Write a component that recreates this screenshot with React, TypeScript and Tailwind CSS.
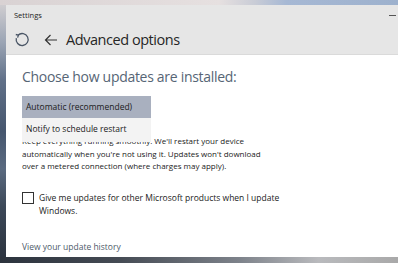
import React from "react";

export default function App() {
  const font = { fontFamily: '"Open Sans", "Noto Sans", sans-serif' };
  return (
    <div className="w-[398px] h-[263px] overflow-hidden flex flex-col" style={font}>
      <div className="h-[5px] shrink-0 bg-[linear-gradient(90deg,#d9d2d3_0%,#e6e0e0_55%,#c9ccd6_64%,#a6b8d4_72%,#9db1cd_100%)]" />
      <div className="flex h-[252px] shrink-0">
        <div className="w-[6px] shrink-0 bg-[linear-gradient(180deg,#cfcdd0_0%,#9aa4b4_15%,#607088_30%,#46566e_50%,#5a6a80_65%,#3c4858_80%,#2c3440_100%)]" />
        <div className="w-[392px] bg-white flex flex-col">
          <div className="bg-[#e6e6e6] h-[50px] flex flex-col border-b border-[#dadada]">
            <div className="flex items-center h-[21px] pl-[8px] pr-[2px]">
              <span className="text-[7.5px] text-[#222] leading-none">Settings</span>
              <div className="ml-auto w-[7px] h-[1px] bg-[#555]" />
            </div>
            <div className="flex items-center h-[28px] pl-[8px]">
              <svg width="16" height="16" viewBox="0 0 16 16" fill="none" stroke="#4a5666" strokeWidth="1.3">
                <path d="M4 3.2 A6 6 0 1 1 2.3 6.2" />
                <path d="M1.8 2.5 L4.4 3.1 L3.6 5.6" />
              </svg>
              <svg className="ml-[14px]" width="14" height="12" viewBox="0 0 14 12" fill="none" stroke="#333" strokeWidth="1.2">
                <path d="M13 6 H1.5 M6.5 1 L1.5 6 L6.5 11" />
              </svg>
              <span className="ml-[8px] text-[14.5px] tracking-[-0.45px] text-[#262626] leading-none">Advanced options</span>
            </div>
          </div>
          <div className="relative flex-1 pl-[16px] pt-[15px]">
            <div className="text-[14px] tracking-[-0.3px] text-[#566575] leading-[14px]">Choose how updates are installed:</div>
            <div className="pt-[51px] text-[8px] leading-[12.5px] text-[#222] whitespace-nowrap">
              Keep everything running smoothly. We'll restart your device
              <br />
              automatically when you're not using it. Updates won't download
              <br />
              over a metered connection (where charges may apply).
            </div>
            <div className="absolute left-[16px] top-[41px] w-[129px] flex flex-col">
              <div className="h-[22px] bg-[#a9b0bf] flex items-center pl-[4px] text-[8.5px] text-[#1a1a1a]">Automatic (recommended)</div>
              <div className="h-[24px] bg-[#f3f3f3] flex items-start pt-[5px] pl-[4px] text-[8.5px] leading-[12px] text-[#1a1a1a]">Notify to schedule restart</div>
            </div>
            <div className="flex mt-[18px]">
              <div className="w-[12px] h-[12px] border border-[#333] mt-[1px] shrink-0" />
              <div className="ml-[5px] text-[8.5px] leading-[13px] text-[#222] whitespace-nowrap">
                Give me updates for other Microsoft products when I update
                <br />
                Windows.
              </div>
            </div>
            <div className="mt-[26px] text-[8.5px] text-[#4e5a6a] leading-none">View your update history</div>
          </div>
        </div>
      </div>
      <div className="flex-1 bg-[linear-gradient(90deg,#2c333d_0%,#454b54_30%,#7d828a_60%,#b9babd_80%,#a9a9a9_100%)]" />
    </div>
  );
}
